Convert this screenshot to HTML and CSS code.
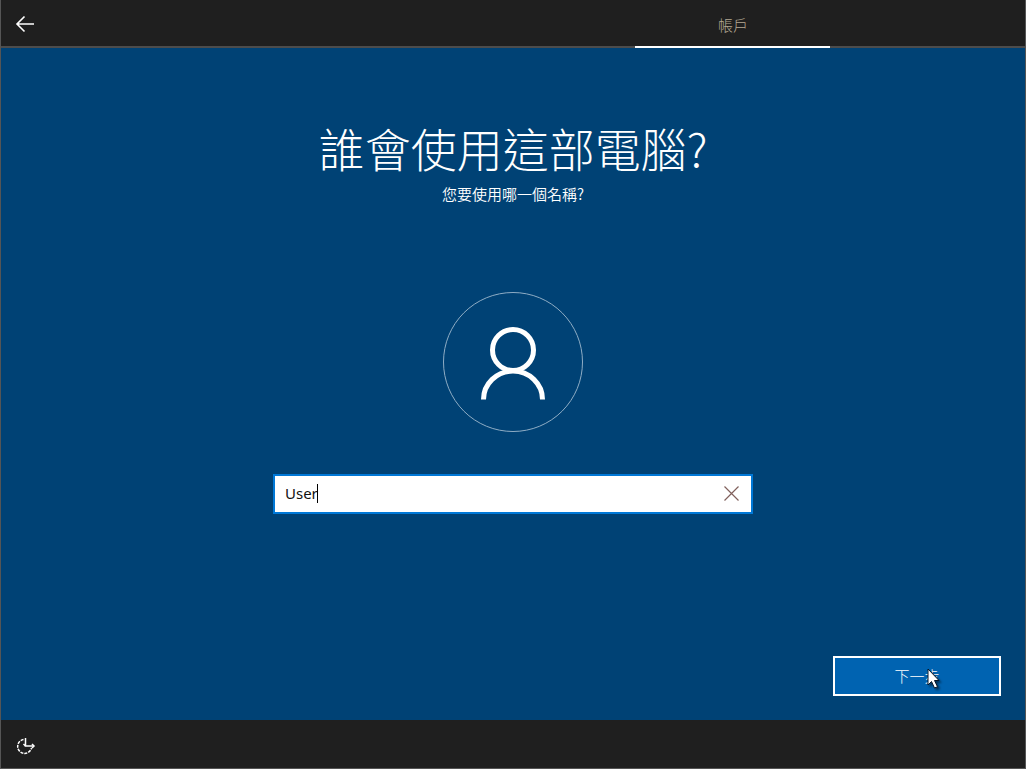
FILE: index.html
```html
<!DOCTYPE html>
<html lang="zh-Hant">
<head>
    <meta charset="UTF-8">
    <meta name="viewport" content="width=device-width, initial-scale=1">
    <title>誰會使用這部電腦?</title>
    <link rel="stylesheet" href="styles.css">
</head>
<body>
<div class="setup">
    <header class="top_bar">
        <button class="back" type="button" aria-label="上一頁">
            <svg width="20" height="18" viewBox="0 0 20 18">
                <path d="M19 9H2M9.500 1.500L2 9l7.500 7.500" fill="none" stroke="#fff" stroke-width="1.600"/>
            </svg>
        </button>
        <nav class="tabs">
            <a class="tab" href="#account">帳戶</a>
        </nav>
    </header>

    <main class="content" id="account">
        <h1 class="title">誰會使用這部電腦?</h1>
        <p class="subtitle"><label for="user_name">您要使用哪一個名稱?</label></p>

        <div class="avatar">
            <svg width="66" height="74" viewBox="0 0 66 74">
                <g fill="none" stroke="#fff" stroke-width="5">
                    <circle cx="33" cy="23" r="20.500"/>
                    <path d="M3.500 72.500A29.500 28.500 0 0 1 62.500 72.500"/>
                </g>
            </svg>
        </div>

        <div class="name_box">
            <input class="name_input" id="user_name" type="text" value="User" autocomplete="off">
            <span class="caret"></span>
            <button class="clear" type="button" aria-label="清除">
                <svg width="15" height="15" viewBox="0 0 15 15">
                    <path d="M.5.5l14 14M14.500.5l-14 14" fill="none" stroke="#80605c" stroke-width="1.200"/>
                </svg>
            </button>
        </div>

        <div class="actions">
            <button class="next" type="button">下一步
                <svg class="pointer" width="16" height="22" viewBox="0 0 16 22">
                    <path d="M1 1v16l3.500-3.500 3 6.500 3-1.300-3-6.200H12z" fill="#fff" stroke="#061526" stroke-width="1"/>
                </svg>
            </button>
        </div>
    </main>

    <footer class="bottom_bar">
        <button class="ease" type="button" aria-label="輕鬆存取">
            <svg width="20" height="18" viewBox="0 0 20 18">
                <g fill="none" stroke="#fff" stroke-width="1.500">
                    <path d="M7.500 2.500A7 7 0 1 0 15.500 11" stroke-dasharray="3 1"/>
                    <path d="M9.500 1v8H18"/>
                    <path d="M7.500 7l2 2M16 7l2 2-2 2"/>
                </g>
            </svg>
        </button>
    </footer>
</div>
</body>
</html>
```

FILE: styles.css
```css
*{
    margin: 0;
    padding: 0;
    box-sizing: border-box;
}
body{
    background: #1f1f1f;
    color: #fff;
    font-family: "Noto Sans", "Noto Sans CJK TC", sans-serif;
    font-size: 15px;
}
button{
    background: none;
    border: 0;
    color: inherit;
    font: inherit;
}
svg{
    display: block;
}
.setup{
    display: flex;
    flex-direction: column;
    min-height: 100vh;
    border: 1px solid #555;
    border-top: 0;
}
/*上方列*/
.top_bar{
    display: flex;
    justify-content: space-between;
    height: 48px;
    background: #1f1f1f;
    border-bottom: 2px solid #4c4c4c;
}
.back{
    padding: 2px 14px 0;
}
.tabs{
    display: flex;
    justify-content: flex-end;
    flex: 1;
    padding-right: 19%;
}
.tab{
    width: 195px;
    height: 48px;
    border-bottom: 2px solid #fff;
    color: #b5a994;
    font-family: "Noto Sans CJK TC", sans-serif;
    font-weight: 300;
    line-height: 50px;
    text-align: center;
    text-decoration: none;
}
/*主要內容*/
.content{
    display: flex;
    flex: 1;
    flex-direction: column;
    align-items: center;
    padding: 69px 24px 24px;
    background: #004275;
}
.title{
    font-family: "Noto Sans CJK TC", sans-serif;
    font-size: 46px;
    font-weight: 300;
    line-height: 60px;
}
.subtitle{
    margin-top: 3px;
    font-family: "Noto Sans CJK TC", sans-serif;
    font-weight: 350;
    line-height: 28px;
}
.avatar{
    display: flex;
    align-items: center;
    justify-content: center;
    width: 140px;
    height: 140px;
    margin-top: 84px;
    padding-top: 3px;
    border: 1px solid #8fadc5;
    border-radius: 50%;
}
.name_box{
    display: flex;
    position: relative;
    width: 100%;
    max-width: 480px;
    height: 40px;
    margin-top: 42px;
    border: 2px solid #0078d7;
    background: #fff;
}
.name_input{
    flex: 1;
    min-width: 0;
    padding: 0 0 2px 10px;
    border: 0;
    outline: 0;
    background: none;
    color: #111;
    font: inherit;
}
/*文字後的游標*/
.caret{
    position: absolute;
    left: 42px;
    top: 8px;
    width: 1px;
    height: 19px;
    background: #000;
}
.clear{
    padding: 0 12px 2px;
}
.actions{
    display: flex;
    justify-content: flex-end;
    width: 100%;
    margin-top: auto;
}
.next{
    position: relative;
    width: 168px;
    height: 40px;
    padding-bottom: 2px;
    border: 2px solid #fff;
    background: #0063b1;
    font-family: "Noto Sans CJK TC", sans-serif;
    font-weight: 300;
}
/*滑鼠指標*/
.pointer{
    position: absolute;
    left: 92px;
    top: 10px;
    filter: drop-shadow(2px 2px 1px rgba(0, 0, 0, .5));
}
/*下方列*/
.bottom_bar{
    display: flex;
    height: 48px;
    background: #1f1f1f;
}
.ease{
    padding: 4px 15px 0;
}
```
